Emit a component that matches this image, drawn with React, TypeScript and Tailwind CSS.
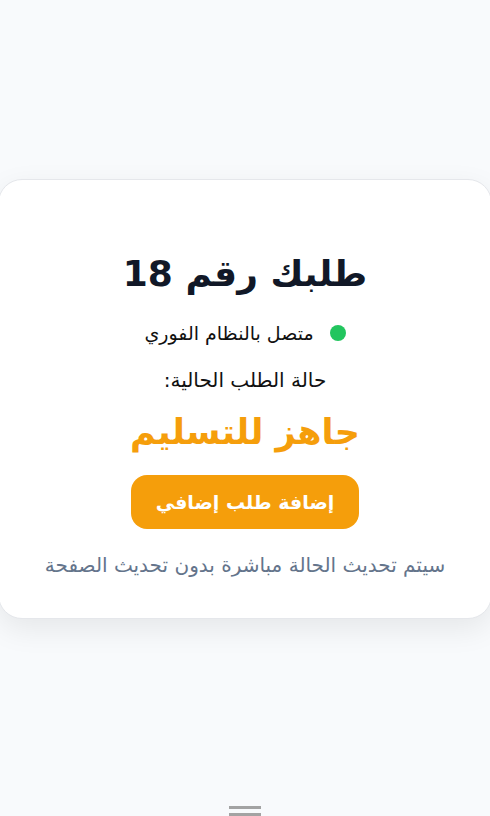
export default function App() {
  return (
    <div
      dir="rtl"
      className="relative flex h-[816px] w-full items-center justify-center overflow-hidden bg-[#f8fafc] pb-[18px] font-['DejaVu_Sans',sans-serif]"
    >
      <div className="flex w-[494px] shrink-0 flex-col items-center rounded-[24px] border border-[#e5e7eb] bg-white px-6 pb-[38px] pt-[70px] text-center shadow-[0_10px_30px_rgba(0,0,0,0.08)]">
        <h1 className="text-[36px] font-bold leading-[48px] text-[#111827]">طلبك رقم 18</h1>
        <div className="mt-[20px] flex items-center gap-[16px] text-[19px] leading-[30px] text-[#111]">
          <span className="h-4 w-4 rounded-full bg-[#22c55e]" />
          <span>متصل بالنظام الفوري</span>
        </div>
        <p className="mt-[17px] text-[20px] leading-[30px] text-[#111]">حالة الطلب الحالية:</p>
        <p className="mt-[14px] text-[35px] font-bold leading-[46px] text-[#f59e0b]">جاهز للتسليم</p>
        <button className="mt-[20px] h-[54px] w-[228px] rounded-[16px] bg-[#f59e0b] text-[19px] font-bold text-white">
          إضافة طلب إضافي
        </button>
        <p className="mt-[21px] text-[20px] leading-[30px] text-[#64748b]">
          سيتم تحديث الحالة مباشرة بدون تحديث الصفحة
        </p>
      </div>
      <div className="absolute bottom-0 left-1/2 flex w-8 -translate-x-1/2 flex-col gap-[4px]">
        <span className="h-[3px] w-full bg-[#a3a3a3]" />
        <span className="h-[3px] w-full bg-[#a3a3a3]" />
      </div>
    </div>
  );
}
